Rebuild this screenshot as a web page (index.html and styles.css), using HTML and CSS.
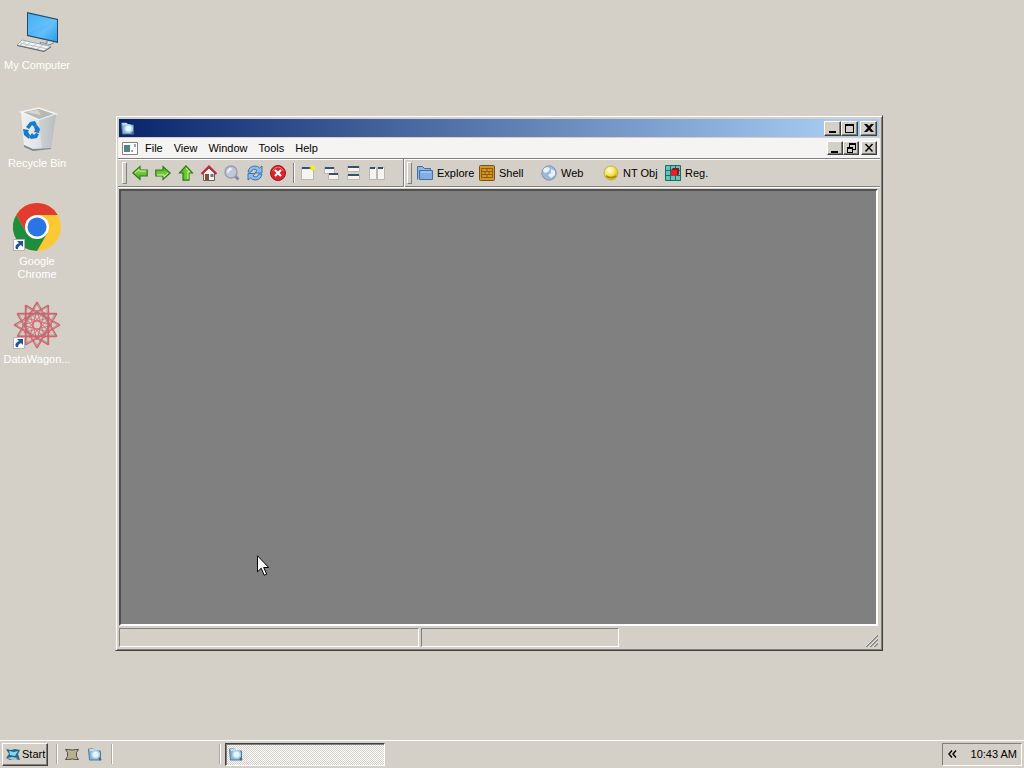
FILE: index.html
```html
<!DOCTYPE html>
<html lang="en">
<head>
  <meta charset="UTF-8">
  <meta name="viewport" content="width=device-width, initial-scale=1.0">
  <title>Desktop</title>
  <link rel="stylesheet" href="styles.css">
</head>
<body>
  <!-- Shared icons -->
  <svg class="defs" aria-hidden="true">
    <defs>
      <linearGradient id="green" x1="0" y1="0" x2="0" y2="1"><stop offset="0" stop-color="#a6e05a"/><stop offset="1" stop-color="#3fae1c"/></linearGradient>
      <linearGradient id="sky" x1="0" y1="0" x2="1" y2="1"><stop offset="0" stop-color="#2b9df0"/><stop offset=".6" stop-color="#62c0fa"/><stop offset="1" stop-color="#2a9cec"/></linearGradient>
      <linearGradient id="bin" x1="0" y1="0" x2="1" y2="0"><stop offset="0" stop-color="#f0f1f3"/><stop offset=".6" stop-color="#dcdee1"/><stop offset="1" stop-color="#a9adb1"/></linearGradient>
      <radialGradient id="ball" cx=".4" cy=".3" r=".7"><stop offset="0" stop-color="#fffde0"/><stop offset=".5" stop-color="#f6e75a"/><stop offset="1" stop-color="#c9a814"/></radialGradient>
    </defs>
    <symbol id="explorer" viewBox="0 0 16 16">
      <path d="M1.500 3h5l1 2h6v9h-11z" fill="#8fb4d2" stroke="#55789c"/>
      <path d="M2 3h5l1 2H3z" fill="#c5dcec"/>
      <circle cx="8.500" cy="8.500" r="3.800" fill="#e6f6fd" stroke="#a4d2ea" stroke-width="1.500"/>
      <path d="M12 12l2 2" stroke="#45638a" stroke-width="2"/>
    </symbol>
    <symbol id="shortcut" viewBox="0 0 12 12">
      <path d="M.5.5h11v11H.5z" fill="#fff" stroke="#b4b4b4"/>
      <path d="M4 2h6v6L8 6Q5 7 5 10H3Q1 6 6 4z" fill="#24509c"/>
    </symbol>
    <symbol id="arrow" viewBox="0 0 16 16">
      <path d="M.8 8L8 1.500V5h7.200v6H8v3.500z" fill="url(#green)" stroke="#2c7d18" stroke-width="1.200"/>
      <path d="M3 8l4-3.800V6h7" fill="none" stroke="#cdf394"/>
    </symbol>
    <symbol id="minimize" viewBox="0 0 12 10"><path d="M2 8h7v2H2z"/></symbol>
    <symbol id="close" viewBox="0 0 12 10"><path d="M1 1h3l2 2 2-2h3L7.500 5 11 9H8L6 7 4 9H1l3.500-4z"/></symbol>
  </svg>

  <main class="desktop">
    <!-- Desktop icons -->
    <nav class="shortcuts" aria-label="Desktop icons">
      <a class="shortcut" href="#computer">
        <svg viewBox="0 0 48 48">
          <path d="M14 5l31 7v24l-31-7z" fill="#234a66"/>
          <path d="M15 6.500l29 6.500v21.500L15 28z" fill="url(#sky)"/>
          <path d="M15 6.500l29 6.500-29 13z" fill="#70c8fa" opacity=".4"/>
          <path d="M34 34v2.500l-7-1 1 2q8 2 13-2" fill="#ddd" stroke="#7d8990"/>
          <path d="M9 33l29 6.500-7 4.500L4 38z" fill="#f3f4f4" stroke="#a2aaae"/>
          <path d="M7 36l28 6M13 34l-6 4M18 35l-6 4.500M24 36.500L18 41M30 38l-6 4" stroke="#bcc3c6"/>
          <path d="M4 38.500l27 6 7-4.500" fill="none" stroke="#5f6a70"/>
        </svg>
        <span>My Computer</span>
      </a>
      <a class="shortcut" href="#bin">
        <svg viewBox="0 0 48 48">
          <path d="M8 7l18-4 17 6-5 34-18 2-9-4z" fill="url(#bin)"/>
          <path d="M8 7l18-4 17 6-17 6z" fill="#b6b8b5" stroke="#f3f4f4" stroke-width="1.500"/>
          <path d="M12 7l13-2 3 5z" fill="#d8d6ce"/>
          <path d="M26 15l17-6-5 34-9 1z" fill="#c3c6c9" opacity=".65"/>
          <path d="M11 40l9 4 18-1v1l-18 2-9-4z" fill="#81888d"/>
          <g fill="#147bce">
            <path d="M13 22l4-5 5-1 2 4-3 2-2-2-3 4z"/>
            <path d="M24 20l3 4-1 4-5-1 1-2-1-3z"/>
            <path d="M26 29l-2 4-6 1-2-2 3-4 2 2 2-2z"/>
            <path d="M10 24l6 1-1 2 2 3-1 4-5-4z"/>
          </g>
        </svg>
        <span>Recycle Bin</span>
      </a>
      <a class="shortcut" href="#chrome">
        <svg viewBox="0 0 48 48">
          <circle cx="24" cy="24" r="24" fill="#fcc934"/>
          <path d="M3.200 12A24 24 0 0 1 44.800 12H24L13.600 30z" fill="#e33b2e"/>
          <path d="M3.200 12A24 24 0 0 0 24 48L34.400 30 24 24 13.600 30z" fill="#1e8e3e"/>
          <circle cx="24" cy="24" r="12" fill="#fff"/>
          <circle cx="24" cy="24" r="9.500" fill="#2b74e8"/>
          <use href="#shortcut" y="36" width="12" height="12"/>
        </svg>
        <span>Google Chrome</span>
      </a>
      <a class="shortcut" href="#datawagon">
        <svg viewBox="0 0 48 48">
          <defs>
            <g id="ray" fill="none">
              <path d="M24 1l20 34.500" stroke="#d8616c" stroke-width="1.300"/>
              <path d="M23 2l20 34" stroke="#98747a" stroke-width=".6"/>
              <path d="M24 9l7.500 28" stroke="#d8616c" stroke-width=".8"/>
            </g>
            <g id="rays"><use href="#ray"/><use href="#ray" transform="rotate(30 24 24)"/><use href="#ray" transform="rotate(60 24 24)"/></g>
          </defs>
          <use href="#rays"/>
          <use href="#rays" transform="rotate(90 24 24)"/>
          <use href="#rays" transform="rotate(180 24 24)"/>
          <use href="#rays" transform="rotate(270 24 24)"/>
          <use href="#shortcut" y="36" width="12" height="12"/>
        </svg>
        <span>DataWagon...</span>
      </a>
    </nav>

    <!-- Explorer window -->
    <section class="window" aria-label="Explorer">
      <header class="title-bar">
        <svg class="icon"><use href="#explorer"/></svg>
        <div class="controls">
          <button aria-label="Minimize"><svg viewBox="0 0 12 10"><use href="#minimize"/></svg></button>
          <button aria-label="Maximize"><svg viewBox="0 0 12 10"><path d="M1 1h9v9H1zM2 3v6h7V3z" fill-rule="evenodd"/></svg></button>
          <button class="close" aria-label="Close"><svg viewBox="0 0 12 10"><use href="#close"/></svg></button>
        </div>
      </header>

      <div class="menu-bar">
        <svg class="icon" viewBox="0 0 16 16">
          <path d="M.5 2.500h15v12H.5z" fill="#fff" stroke="#87847e"/>
          <path d="M2 5h6v7H2z" fill="#50838b"/><path d="M9 11h2M13 4v3" stroke="#2e4f8d"/>
        </svg>
        <nav class="menus">
          <button>File</button>
          <button>View</button>
          <button>Window</button>
          <button>Tools</button>
          <button>Help</button>
        </nav>
        <div class="controls mdi">
          <button aria-label="Minimize child"><svg viewBox="0 0 12 10"><use href="#minimize"/></svg></button>
          <button aria-label="Restore child"><svg viewBox="0 0 12 10"><path d="M4 0h7v7H8v3H2V4h2zM5 2v2h3v2h2V2zM3 6v3h4V6z" fill-rule="evenodd"/></svg></button>
          <button class="close" aria-label="Close child"><svg viewBox="0 0 12 10"><path d="M2.500 1l7 7.500M9.500 1l-7 7.500" stroke="#000" stroke-width="1.500"/></svg></button>
        </div>
      </div>

      <div class="toolbar">
        <div class="band nav-band">
          <button aria-label="Back"><svg class="icon"><use href="#arrow"/></svg></button>
          <button aria-label="Forward"><svg class="icon" viewBox="0 0 16 16"><use href="#arrow" width="16" height="16" transform="rotate(180 8 8)"/></svg></button>
          <button aria-label="Up"><svg class="icon" viewBox="0 0 16 16"><use href="#arrow" width="16" height="16" transform="rotate(90 8 8)"/></svg></button>
          <button aria-label="Home">
            <svg class="icon" viewBox="0 0 16 16">
              <path d="M2.500 8L8 3l5.500 5v7.500h-11z" fill="#f4f1eb" stroke="#67605a"/>
              <path d="M.5 9L8 1.500 15.500 9" fill="none" stroke="#c9253a" stroke-width="2"/>
              <path d="M4 9h4v6H4z" fill="#8c4935"/><path d="M9.500 9h3v3h-3z" fill="#5279ac"/>
            </svg>
          </button>
          <button aria-label="Search">
            <svg class="icon" viewBox="0 0 16 16">
              <path d="M10.500 10.500l4 4" stroke="#8188a2" stroke-width="3"/>
              <circle cx="7" cy="7" r="6" fill="#bdc8d8" stroke="#9a9fae" stroke-width="1.500"/>
              <path d="M4 7.500q0-3.500 3.500-3.500" fill="none" stroke="#f1f5fa" stroke-width="2"/>
            </svg>
          </button>
          <button aria-label="Refresh">
            <svg class="icon" viewBox="0 0 16 16">
              <g fill="#8dbde8" stroke="#3569a7" stroke-width=".9">
                <path d="M1 7q1-6 7-6 3 0 4.500 2L15 1v7H8l2-2.500Q6 2.500 4 7z"/>
                <path d="M15 9q-1 6-7 6-3 0-4.500-2L1 15V8.500h7L6 11q4 2.500 6-2z"/>
              </g>
            </svg>
          </button>
          <button aria-label="Stop">
            <svg class="icon" viewBox="0 0 16 16">
              <circle cx="8" cy="8" r="7.500" fill="#d9252d" stroke="#a30f1b"/>
              <path d="M2.500 6q2-4 5.500-4t5.500 4" fill="none" stroke="#ee7475"/>
              <path d="M5 5l6 6M11 5l-6 6" stroke="#fff" stroke-width="2.200"/>
            </svg>
          </button>
          <span class="separator"></span>
          <button aria-label="New window">
            <svg class="icon" viewBox="0 0 16 16">
              <path d="M1.500 2.500h12v12h-12z" fill="#f5f4f0" stroke="#b9b7b0"/><path d="M2 2h9v2H2z" fill="#355078"/>
              <path d="M12.500 0v6M9.500 3h6M10.500 1l4 4M14.500 1l-4 4" stroke="#f2ef20" stroke-width="1.200"/>
            </svg>
          </button>
          <button aria-label="Cascade">
            <svg class="icon" viewBox="0 0 16 16">
              <path d="M1.500 2.500h10v6h-10zM5.500 8.500h10v6h-10z" fill="#f5f4f0" stroke="#b9b7b0"/>
              <path d="M2 2h9v2H2zM6 8h9v2H6z" fill="#355078"/>
            </svg>
          </button>
          <button aria-label="Tile horizontally">
            <svg class="icon" viewBox="0 0 16 16">
              <path d="M1.500 1.500h12v5h-12zM1.500 9.500h12v5h-12z" fill="#f5f4f0" stroke="#b9b7b0"/>
              <path d="M2 1h11v2H2zM2 9h11v2H2z" fill="#355078"/>
            </svg>
          </button>
          <button aria-label="Tile vertically">
            <svg class="icon" viewBox="0 0 16 16">
              <path d="M.5 2.500h7v12h-7zM8.500 2.500h7v12h-7z" fill="#f5f4f0" stroke="#b9b7b0"/>
              <path d="M1 2h5v2H1zM9 2h5v2H9z" fill="#355078"/>
            </svg>
          </button>
        </div>
        <div class="band drive-band">
          <button>
            <svg class="icon" viewBox="0 0 16 16">
              <path d="M.5 14.500v-13h5l2 2h6v3" fill="#8db5e5" stroke="#426fa6"/>
              <path d="M2.500 5.500h13v9h-13z" fill="#83aee5" stroke="#426fa6"/><path d="M4 7h10" stroke="#b9d5f5"/>
            </svg>
            Explore
          </button>
          <button>
            <svg class="icon" viewBox="0 0 16 16">
              <rect x=".5" y=".5" width="15" height="15" rx="1" fill="#d79524" stroke="#745023"/>
              <path d="M2.500 3.500h11v9h-11zM3 6.500h10M3 9.500h10M8 4v2M6 7v2M10 7v2M8 10v2" fill="none" stroke="#8c5c0c"/>
            </svg>
            Shell
          </button>
          <button>
            <svg class="icon" viewBox="0 0 16 16">
              <circle cx="8" cy="8" r="7.200" fill="#9bb9dc" stroke="#7795ba"/>
              <path d="M3 3l4-1 2 2-2 3-3 1-2-2zM10 4l4 2v4l-4 3-3-3 3-2z" fill="#e9f0f7"/>
            </svg>
            Web
          </button>
          <button>
            <svg class="icon" viewBox="0 0 16 16">
              <circle cx="8" cy="8" r="7" fill="url(#ball)" stroke="#c4b256"/>
              <path d="M3 11q5 3 10 0" fill="none" stroke="#a98d11" stroke-width="1.500"/>
            </svg>
            NT Obj
          </button>
          <button>
            <svg class="icon" viewBox="0 0 16 16">
              <path d="M.5.500h15v15H.5zM.5 5.500h15M.5 10.500h15M5.500.5v15M10.500.5v15" fill="#62c5b9" stroke="#176f68"/>
              <path d="M6 5l2-2h6v6l-2 2H6z" fill="#8e1620"/><path d="M6 5h6v6H6z" fill="#e3222d"/>
            </svg>
            Reg.
          </button>
        </div>
      </div>

      <div class="workspace"></div>

      <footer class="status-bar">
        <div class="panel panel-main"></div>
        <div class="panel panel-info"></div>
        <svg class="grip" viewBox="0 0 12 12">
          <path d="M0 12L12 0M4 12l8-8M8 12l4-4" stroke="#808080" stroke-width="1.600"/>
          <path d="M-1 12L12-1M3 12l9-9M7 12l5-5" stroke="#fff" stroke-width=".7"/>
        </svg>
      </footer>
    </section>

    <svg class="cursor" viewBox="0 0 12 21" aria-hidden="true">
      <path d="M.5.8v16l3.700-3.600 3 7 2.500-1-3-6.700h5z" fill="#fff" stroke="#000"/>
    </svg>
  </main>

  <!-- Taskbar -->
  <footer class="taskbar">
    <button class="start">
      <svg class="icon" viewBox="0 0 16 16">
        <path d="M1 3l5 1 4-1 5 1-2 4 2 6-5-1-5 1-4-2 3-4z" fill="#286886"/>
        <path d="M4 5l5 1 4-1-3 5-5-1z" fill="#80d8f4"/><path d="M2 12l5-1 6 1-5 2z" fill="#a9c6cf"/>
      </svg>
      Start
    </button>
    <div class="quick-launch">
      <button aria-label="Show desktop">
        <svg class="icon" viewBox="0 0 16 16"><path d="M1.500 3.500h3q4 1 7 0h3l-2 3v4l2 3h-3q-3-1-7 0h-3l2-3v-4z" fill="#b8b092" stroke="#514e43"/></svg>
      </button>
      <button aria-label="Explorer"><svg class="icon"><use href="#explorer"/></svg></button>
    </div>
    <div class="address-band"></div>
    <div class="tasks">
      <button class="task" aria-label="Explorer window"><svg class="icon"><use href="#explorer"/></svg></button>
    </div>
    <div class="tray">
      <button aria-label="Show hidden icons">
        <svg viewBox="0 0 9 8"><path d="M4 .5L1 4l3 3.500M8 .5L5 4l3 3.500" fill="none" stroke="#000" stroke-width="1.400"/></svg>
      </button>
      <time>10:43 AM</time>
    </div>
  </footer>
</body>
</html>
```
FILE: styles.css
```css
* {
  box-sizing: border-box;
}

body {
  display: flex;
  flex-direction: column;
  height: 100vh;
  margin: 0;
  overflow: hidden;
  background: #d4d0c8;
  color: #000;
  font: 11px/13px "Liberation Sans", Arial, sans-serif;
}

button {
  display: flex;
  align-items: center;
  padding: 0;
  border: 0;
  background: none;
  color: inherit;
  font: inherit;
  white-space: nowrap;
}

svg {
  display: block;
  flex: none;
}

.defs {
  position: absolute;
  width: 0;
  height: 0;
}

.icon {
  width: 16px;
  height: 16px;
}

.desktop {
  position: relative;
  flex: 1;
}

/* Desktop icons */
.shortcuts {
  display: flex;
  flex-direction: column;
  width: 74px;
  padding-top: 7px;
}

.shortcut {
  display: flex;
  flex-direction: column;
  align-items: center;
  gap: 4px;
  height: 98px;
  color: #fff;
  text-align: center;
  text-decoration: none;

  svg {
    width: 48px;
    height: 48px;
  }

  span {
    max-width: 72px;
  }
}

/* Window */
.window {
  position: absolute;
  top: 115px;
  right: 141px;
  bottom: 89px;
  left: 115px;
  display: flex;
  flex-direction: column;
  padding: 2px;
  border: 1px solid;
  border-color: #d4d0c8 #404040 #404040 #d4d0c8;
  background: #d4d0c8;
  box-shadow: inset 1px 1px #fff, inset -1px -1px #808080;
}

.title-bar {
  display: flex;
  align-items: center;
  height: 20px;
  margin: 0 1px;
  padding: 0 2px 0 1px;
  border-top: 1px solid #d4d0c8;
  border-bottom: 1px solid #d4d0c8;
  background: linear-gradient(to right, #0a246a, #a6caf0 94%);
}

.controls {
  display: flex;
  margin-left: auto;

  button {
    justify-content: center;
    width: 17px;
    height: 15px;
    border: 1px solid;
    border-color: #fff #404040 #404040 #fff;
    background: #d4d0c8;
    box-shadow: inset -1px -1px #808080;
  }

  svg {
    width: 12px;
    height: 10px;
  }

  .close {
    margin-left: 2px;
  }

  &.mdi button {
    width: 16px;
    height: 14px;
  }
}

.menu-bar {
  display: flex;
  align-items: center;
  height: 20px;
  padding: 0 3px 0 4px;
  background: #f5f4f2;
}

.menus {
  display: flex;
  gap: 11px;
  margin-left: 7px;
}

.toolbar {
  display: flex;
  height: 30px;
  border-top: 1px solid #808080;
  border-bottom: 1px solid #fff;
  box-shadow: inset 0 1px #fff, inset 0 -1px #808080;
}

.band {
  display: flex;
  align-items: center;

  &::before {
    content: "";
    width: 3px;
    height: 20px;
    border: 1px solid;
    border-color: #fff #808080 #808080 #fff;
  }
}

.nav-band {
  width: 286px;
  padding-left: 4px;
  border-right: 1px solid #808080;

  &::before {
    margin-right: 5px;
  }

  button {
    width: 23px;
  }
}

.separator {
  width: 2px;
  height: 20px;
  margin: 0 5px 0 0;
  border-left: 1px solid #808080;
  border-right: 1px solid #fff;
}

.drive-band {
  padding-left: 2px;
  border-left: 1px solid #fff;

  &::before {
    margin-right: 5px;
  }

  button {
    gap: 4px;
    width: 62px;
  }
}

.workspace {
  flex: 1;
  margin: 1px 2px 0 1px;
  border: 2px solid;
  border-color: #505050 #fff #fff #505050;
  background: #808080;
}

.status-bar {
  display: flex;
  gap: 2px;
  height: 22px;
  padding: 2px 1px 1px;
}

.panel {
  border: 1px solid;
  border-color: #808080 #fff #fff #808080;
}

.panel-main {
  width: 300px;
}

.panel-info {
  width: 198px;
}

.grip {
  width: 12px;
  height: 12px;
  margin: auto 1px 0 auto;
}

.cursor {
  position: absolute;
  top: 555px;
  left: 257px;
  width: 12px;
  height: 21px;
}

/* Taskbar */
.taskbar {
  display: flex;
  align-items: center;
  height: 28px;
  padding: 1px 2px 2px;
  border-top: 1px solid #fff;
}

.start {
  gap: 1px;
  width: 46px;
  height: 23px;
  padding-left: 2px;
  border: 1px solid;
  border-color: #fff #404040 #404040 #fff;
  box-shadow: inset -1px -1px #808080;
}

.quick-launch,
.address-band,
.tasks {
  display: flex;
  align-items: center;
  height: 20px;
}

.quick-launch {
  gap: 7px;
  width: 55px;
  margin-left: 8px;
  padding-left: 6px;
  border-left: 2px groove #fff;
}

.address-band {
  width: 108px;
  border-left: 2px groove #fff;
}

.tasks {
  flex: 1;
  padding-left: 4px;
  border-left: 2px groove #fff;
}

.task {
  width: 160px;
  height: 23px;
  padding-left: 2px;
  border: 1px solid;
  border-color: #404040 #fff #fff #404040;
  background: repeating-conic-gradient(#fff 0 25%, #d4d0c8 0 50%) 0 0 / 2px 2px;
  box-shadow: inset 1px 1px #808080;
}

.tray {
  display: flex;
  align-items: center;
  justify-content: space-between;
  width: 80px;
  height: 23px;
  padding: 0 4px 0 5px;
  border: 1px solid;
  border-color: #808080 #fff #fff #808080;

  svg {
    width: 9px;
    height: 8px;
  }
}
```
